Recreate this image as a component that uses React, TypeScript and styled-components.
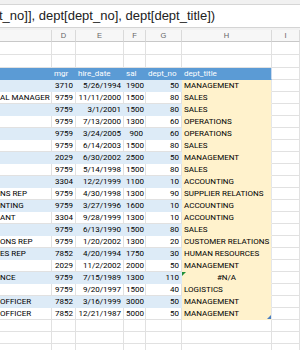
import React from 'react';
import styled, { createGlobalStyle } from 'styled-components';

const COLS = '52px 24px 48px 22px 36px 90px 1fr';
const GRID = '#e1e1e1';
const BAND = '#ddebf7';
const HEAD = '#5b9bd5';
const CREAM = '#fff2cc';

type Rec = { title?: string; mgr: string; hire: string; sal: string; no: string; dept: string };

const rows: Rec[] = [
  { mgr: '3710', hire: '5/26/1994', sal: '1900', no: '50', dept: 'MANAGEMENT' },
  { title: 'AL MANAGER', mgr: '9759', hire: '11/11/2000', sal: '1500', no: '80', dept: 'SALES' },
  { mgr: '9759', hire: '3/1/2001', sal: '1500', no: '80', dept: 'SALES' },
  { mgr: '9759', hire: '7/13/2000', sal: '1300', no: '60', dept: 'OPERATIONS' },
  { mgr: '9759', hire: '3/24/2005', sal: '900', no: '60', dept: 'OPERATIONS' },
  { mgr: '9759', hire: '6/14/2003', sal: '1500', no: '80', dept: 'SALES' },
  { mgr: '2029', hire: '6/30/2002', sal: '2500', no: '50', dept: 'MANAGEMENT' },
  { mgr: '9759', hire: '5/14/1998', sal: '1500', no: '80', dept: 'SALES' },
  { mgr: '3304', hire: '12/2/1999', sal: '1100', no: '10', dept: 'ACCOUNTING' },
  { title: 'NS REP', mgr: '9759', hire: '4/30/1998', sal: '1300', no: '90', dept: 'SUPPLIER RELATIONS' },
  { title: 'NTING', mgr: '9759', hire: '3/27/1996', sal: '1600', no: '10', dept: 'ACCOUNTING' },
  { title: 'ANT', mgr: '3304', hire: '9/28/1999', sal: '1300', no: '10', dept: 'ACCOUNTING' },
  { mgr: '9759', hire: '6/13/1990', sal: '1500', no: '80', dept: 'SALES' },
  { title: 'ONS REP', mgr: '9759', hire: '1/20/2002', sal: '1300', no: '20', dept: 'CUSTOMER RELATIONS' },
  { title: 'ES REP', mgr: '7852', hire: '4/20/1994', sal: '1750', no: '30', dept: 'HUMAN RESOURCES' },
  { mgr: '2029', hire: '11/2/2002', sal: '2000', no: '50', dept: 'MANAGEMENT' },
  { title: 'NCE', mgr: '9759', hire: '7/15/1989', sal: '1300', no: '110', dept: '#N/A' },
  { mgr: '9759', hire: '9/20/1997', sal: '1500', no: '40', dept: 'LOGISTICS' },
  { title: 'OFFICER', mgr: '7852', hire: '3/16/1999', sal: '3000', no: '50', dept: 'MANAGEMENT' },
  { title: 'OFFICER', mgr: '7852', hire: '12/21/1987', sal: '5000', no: '50', dept: 'MANAGEMENT' },
];

const letters = ['', 'D', 'E', 'F', 'G', 'H', 'I'];

export default function App() {
  return (
    <Sheet>
      <GlobalStyle />
      <TopStrip />
      <FormulaBar>t_no]], dept[dept_no], dept[dept_title])</FormulaBar>
      <Gap />
      <Row>
        {letters.map((l, i) => (
          <ColHead key={i}>{l}</ColHead>
        ))}
      </Row>
      {[0, 1].map((r) => (
        <Row key={r} $h={13}>
          {letters.map((_, i) => (
            <Cell key={i} />
          ))}
        </Row>
      ))}
      <Row>
        <Cell $fill={HEAD} />
        <Cell $fill={HEAD} $ink="#fff">mgr</Cell>
        <Cell $fill={HEAD} $ink="#fff">hire_date</Cell>
        <Cell $fill={HEAD} $ink="#fff">sal</Cell>
        <Cell $fill={HEAD} $ink="#fff">dept_no</Cell>
        <Cell $fill={HEAD} $ink="#fff" $edge="#c9d9ee">dept_title</Cell>
        <Cell />
      </Row>
      {rows.map((r, i) => {
        const fill = i % 2 === 0 ? BAND : undefined;
        const last = i === rows.length - 1;
        return (
          <Row key={i}>
            <Cell $fill={fill}>{r.title}</Cell>
            <Cell $fill={fill} $align="right">{r.mgr}</Cell>
            <Cell $fill={fill} $align="right">{r.hire}</Cell>
            <Cell $fill={fill} $align="right">{r.sal}</Cell>
            <Cell $fill={fill} $align="right">{r.no}</Cell>
            <Cell $fill={CREAM} $edge="#e3e6ea" $align={r.dept === '#N/A' ? 'center' : 'left'}>
              {r.dept === '#N/A' && <ErrorMark />}
              {r.dept}
              {last && <ResizeHandle />}
            </Cell>
            <Cell />
          </Row>
        );
      })}
      {[0, 1, 2].map((r) => (
        <Row key={'e' + r}>
          {letters.map((_, i) => (
            <Cell key={i} />
          ))}
        </Row>
      ))}
    </Sheet>
  );
}

const GlobalStyle = createGlobalStyle`
  html, body {
    margin: 0;
    padding: 0;
    background: #fff;
  }
  body {
    font-family: 'Liberation Sans', Arial, sans-serif;
    overflow: hidden;
  }
`;

const Sheet = styled.div`
  width: 300px;
  height: 350px;
  overflow: hidden;
  background: #fff;
`;

const TopStrip = styled.div`
  height: 4px;
  background: #f1f1f1;
  border-bottom: 1px solid #d6d6d6;
`;

const FormulaBar = styled.div`
  height: 22px;
  line-height: 22px;
  font-size: 13px;
  color: #222;
  white-space: nowrap;
  overflow: hidden;
  text-indent: -1px;
  border-bottom: 1px solid #d4d4d4;
`;

const Gap = styled.div`
  height: 2px;
  background: #f1f1f1;
`;

const Row = styled.div<{ $h?: number }>`
  display: grid;
  grid-template-columns: ${COLS};
  height: ${(p) => p.$h ?? 12}px;
`;

const ColHead = styled.div`
  box-sizing: border-box;
  background: #f7f7f7;
  border-right: 1px solid #dadada;
  border-bottom: 1px solid #c8c8c8;
  color: #666;
  font-size: 7.5px;
  line-height: 11px;
  text-align: center;
`;

const Cell = styled.div<{
  $fill?: string;
  $edge?: string;
  $align?: 'left' | 'right' | 'center';
  $ink?: string;
}>`
  position: relative;
  box-sizing: border-box;
  overflow: hidden;
  white-space: nowrap;
  padding: 0 2px;
  font-family: Roboto, 'Liberation Sans', sans-serif;
  font-size: 8px;
  line-height: 11px;
  text-align: ${(p) => p.$align ?? 'left'};
  color: ${(p) => p.$ink ?? '#000'};
  background: ${(p) => p.$fill ?? '#fff'};
  border-right: 1px solid ${(p) => p.$edge ?? p.$fill ?? GRID};
  border-bottom: 1px solid ${(p) => p.$fill ?? GRID};

  &:first-child {
    padding-left: 0;
  }
`;

const ErrorMark = styled.span`
  position: absolute;
  top: 0;
  left: 0;
  width: 0;
  height: 0;
  border-top: 4px solid #1f8f3a;
  border-right: 4px solid transparent;
`;

const ResizeHandle = styled.span`
  position: absolute;
  right: 0;
  bottom: 0;
  width: 0;
  height: 0;
  border-bottom: 4px solid #4a7fc1;
  border-left: 4px solid transparent;
`;
